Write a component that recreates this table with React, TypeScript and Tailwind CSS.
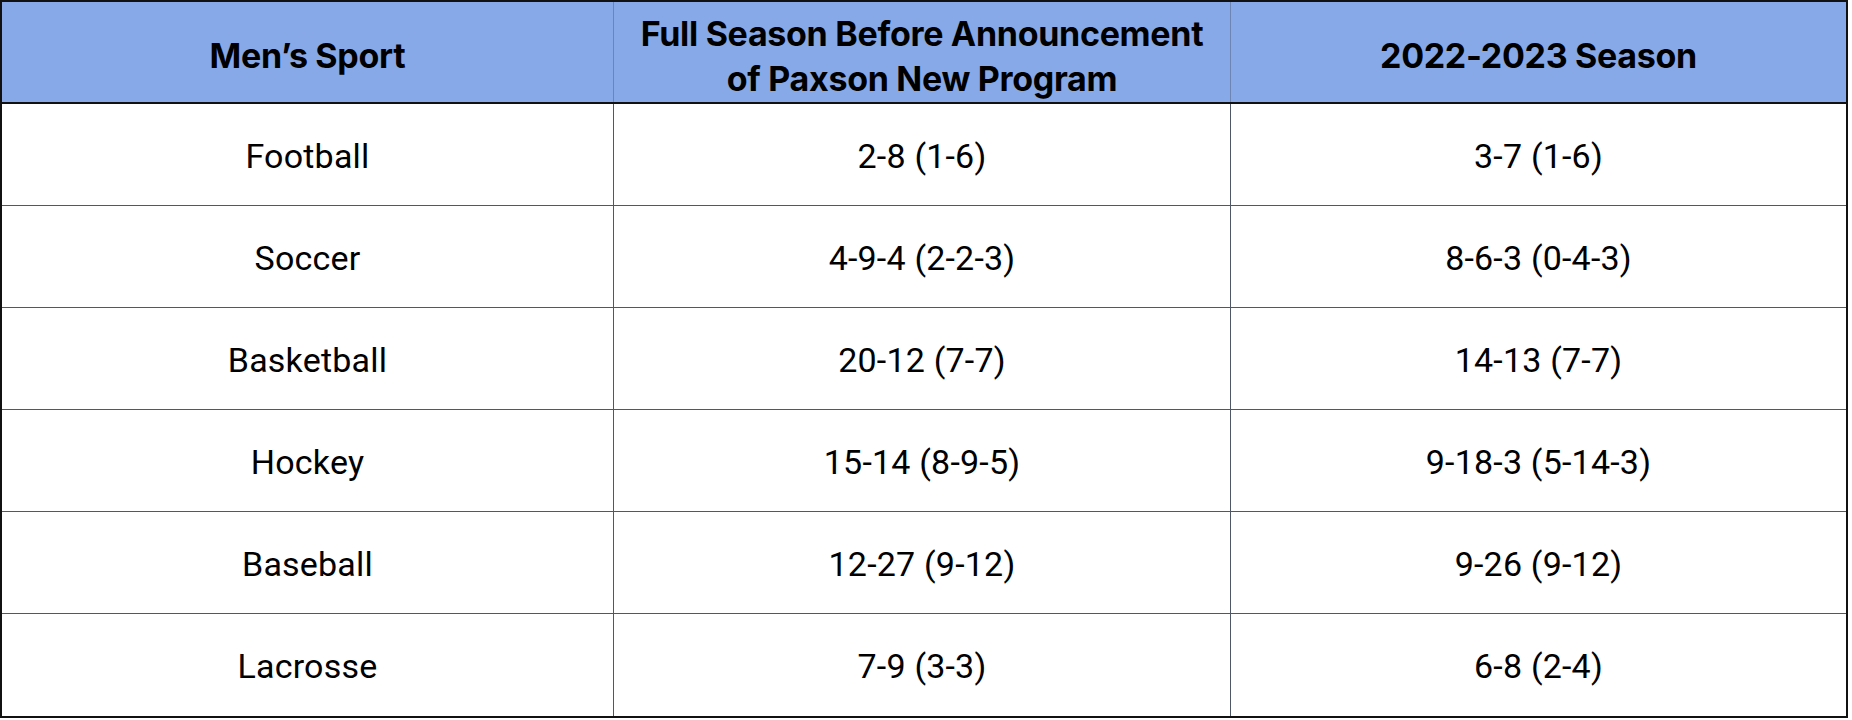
const rows: [string, string, string][] = [
  ["Football", "2-8 (1-6)", "3-7 (1-6)"],
  ["Soccer", "4-9-4 (2-2-3)", "8-6-3 (0-4-3)"],
  ["Basketball", "20-12 (7-7)", "14-13 (7-7)"],
  ["Hockey", "15-14 (8-9-5)", "9-18-3 (5-14-3)"],
  ["Baseball", "12-27 (9-12)", "9-26 (9-12)"],
  ["Lacrosse", "7-9 (3-3)", "6-8 (2-4)"],
];

const cols = "grid grid-cols-[612px_617px_615px]";

export default function App() {
  return (
    <div className="w-[1852px] h-[720px] bg-white">
      <div className="w-[1848px] border-2 border-[#111] text-black">
        <div
          className={`${cols} h-[102px] bg-[#87a9e8] border-b-2 border-[#111] font-['Inter','Liberation_Sans',sans-serif] text-[34px] font-bold tracking-[-0.3px]`}
        >
          <div className="flex items-center justify-center pt-[7px] border-r border-[#6d85b3]">
            Men’s Sport
          </div>
          <div className="flex items-center justify-center pt-[7px] border-r border-[#6d85b3] leading-[45px] text-center">
            Full Season Before Announcement
            <br />
            of Paxson New Program
          </div>
          <div className="flex items-center justify-center pt-[7px]">2022-2023 Season</div>
        </div>
        {rows.map((r, i) => (
          <div
            key={r[0]}
            className={`${cols} h-[102px] font-['Roboto','Liberation_Sans',sans-serif] text-[34px] tracking-[0.2px] ${
              i < rows.length - 1 ? "border-b border-[#4f5866]" : ""
            }`}
          >
            <div className="flex items-center justify-center pt-[3px] border-r border-[#4f5866]">{r[0]}</div>
            <div className="flex items-center justify-center pt-[3px] border-r border-[#4f5866]">{r[1]}</div>
            <div className="flex items-center justify-center pt-[3px]">{r[2]}</div>
          </div>
        ))}
      </div>
    </div>
  );
}
